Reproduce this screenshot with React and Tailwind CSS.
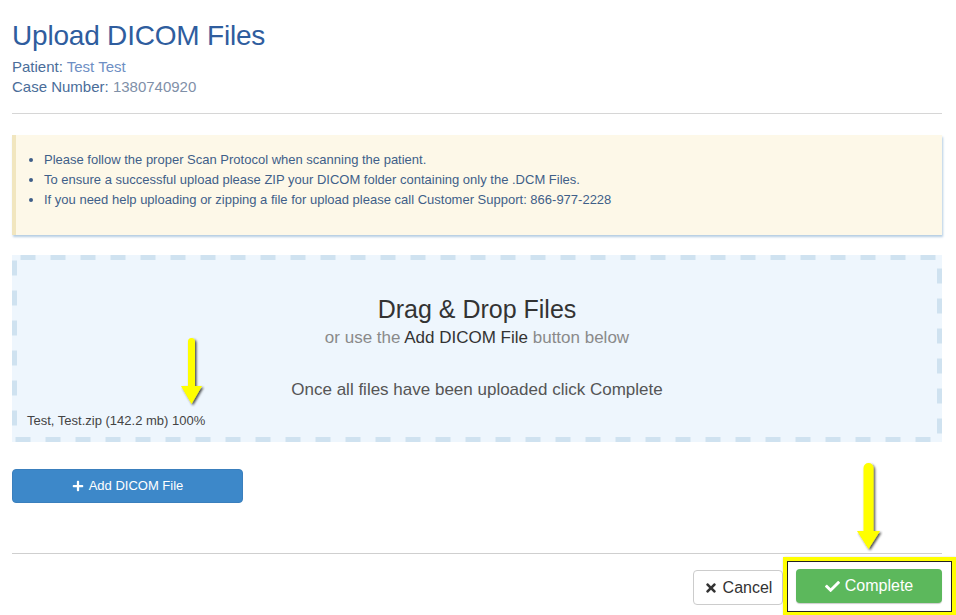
import React from "react";
import { FaPlus, FaCheck, FaTimes } from "react-icons/fa";

function Arrow({ className, w, h, shaft, headH }) {
  const cx = (w - 3) / 2;
  const s = shaft / 2;
  const hw = (w - 3) / 2;
  const bottom = h - 3;
  const neck = bottom - headH;
  const d = `M${cx - s} ${s + 1} A${s} ${s} 0 0 1 ${cx + s} ${s + 1} L${cx + s} ${neck} L${cx + hw} ${neck} L${cx} ${bottom} L${cx - hw} ${neck} L${cx - s} ${neck} Z`;
  return (
    <svg className={className} viewBox={`0 0 ${w} ${h}`} width={w} height={h}>
      <defs>
        <filter id={`sh${w}`} x="-50%" y="-20%" width="200%" height="140%">
          <feDropShadow dx="1.5" dy="1.5" stdDeviation="1" floodColor="#000" floodOpacity="0.7" />
        </filter>
      </defs>
      <path d={d} fill="#ffff00" filter={`url(#sh${w})`} />
    </svg>
  );
}

export default function App() {
  return (
    <div
      className="w-[956px] h-[615px] overflow-hidden bg-white pl-[12px] pr-[14px] pt-[18px] relative"
      style={{ fontFamily: '"Liberation Sans", Arial, sans-serif' }}
    >
      <h1 className="text-[28px] leading-[36px] text-[#2f5d9e] tracking-[-0.2px]">Upload DICOM Files</h1>
      <div className="text-[15px] leading-[20px] mt-[3px]">
        <div>
          <span className="text-[#4a6d99]">Patient: </span>
          <span className="text-[#6e8fc4]">Test Test</span>
        </div>
        <div>
          <span className="text-[#4a6d99]">Case Number: </span>
          <span className="text-[#7f90a8]">1380740920</span>
        </div>
      </div>
      <div className="mt-[16px] h-px bg-[#d6d6d6]" />

      <div className="mt-[21px] h-[100px] bg-[#fdf8e8] border-l-[4px] border-[#f1e6bf] shadow-[1px_2px_2px_rgba(150,185,215,0.7)] pt-[15px] pl-[26px]">
        <ul className="list-disc text-[13px] leading-[20px] ml-[2px]">
          <li className="text-[#3f5f88]">Please follow the proper Scan Protocol when scanning the patient.</li>
          <li className="text-[#3f5f88]">To ensure a successful upload please ZIP your DICOM folder containing only the .DCM Files.</li>
          <li className="text-[#3f5f88]">If you need help uploading or zipping a file for upload please call Customer Support: 866-977-2228</li>
        </ul>
      </div>

      <div className="mt-[20px] h-[187px] bg-[#eef6fd] relative flex flex-col items-center pt-[38px]">
        <svg className="absolute inset-0 pointer-events-none" width="930" height="187" viewBox="0 0 930 187">
          <rect x="2.5" y="2.5" width="925" height="182" fill="none" stroke="#cfe2f0" strokeWidth="5" strokeDasharray="15 15" strokeDashoffset="-6" />
        </svg>
        <div className="relative text-[25px] leading-[32px] text-[#333]">Drag &amp; Drop Files</div>
        <div className="relative text-[17px] leading-[24px] text-[#8a8a8a] mt-[1px]">
          or use the <span className="text-[#333]">Add DICOM File</span> button below
        </div>
        <div className="relative text-[17px] leading-[24px] text-[#555] mt-[28px]">Once all files have been uploaded click Complete</div>
        <div className="absolute left-[15px] top-[157px] text-[13px] leading-[18px] text-[#444]">
          Test, Test.zip (142.2 mb) 100%
        </div>
        <Arrow className="absolute left-[169px] top-[82px]" w={24} h={70} shaft={7} headH={18} />
      </div>

      <button className="mt-[27px] w-[231px] h-[34px] bg-[#3d88c9] border border-[#3a7fbd] rounded-[4px] text-white text-[13px] flex items-center justify-center gap-[5px]">
        <FaPlus className="w-[12px] h-[12px]" />
        <span>Add DICOM File</span>
      </button>

      <div className="mt-[50px] h-px bg-[#cfcfcf]" />

      <div className="flex justify-end gap-[13px] mt-[15px]">
        <button className="w-[90px] h-[35px] mt-[1px] bg-white border border-[#ccc] rounded-[4px] text-[#333] text-[16px] flex items-center justify-center gap-[5px]">
          <FaTimes className="w-[14px] h-[14px]" />
          <span>Cancel</span>
        </button>
        <div className="relative">
          <div className="absolute left-[-13px] right-[-14px] top-[-12px] bottom-[-11px] border-[4px] border-[#ffff00] shadow-[inset_0_0_0_1px_#222,1px_1px_2px_rgba(0,0,0,0.6)]" />
          <Arrow className="absolute left-[61px] top-[-107px]" w={26} h={90} shaft={10} headH={18} />
          <button className="relative w-[146px] h-[34px] bg-[#5cb85c] rounded-[4px] text-white text-[16px] flex items-center justify-center gap-[5px] shadow-[0_1px_1px_rgba(0,0,0,0.2)]">
            <FaCheck className="w-[15px] h-[15px]" />
            <span>Complete</span>
          </button>
        </div>
      </div>
    </div>
  );
}
